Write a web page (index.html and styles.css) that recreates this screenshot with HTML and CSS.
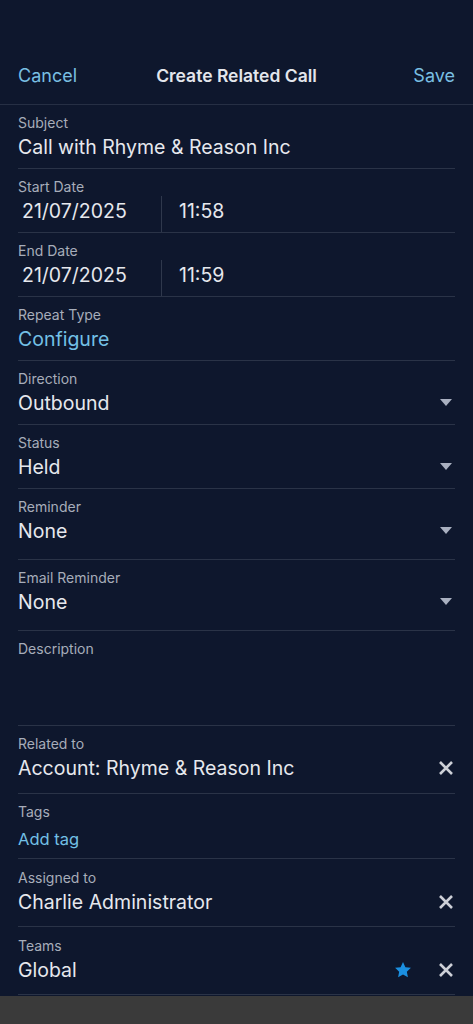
FILE: index.html
```
<!DOCTYPE html>
<html lang="en">

<head>
  <meta charset="UTF-8">
  <title>Create Related Call</title>
  <link rel="stylesheet" href="styles.css">
</head>

<body>
  <div class="screen">
    <div class="header">
      <a href="javascript:;" class="header-btn">Cancel</a>
      <span class="header-title">Create Related Call</span>
      <a href="javascript:;" class="header-btn save">Save</a>
    </div>

    <div class="form">
      <div class="field">
        <div class="field-label">Subject</div>
        <div class="field-value">Call with Rhyme &amp; Reason Inc</div>
      </div>

      <div class="field">
        <div class="field-label">Start Date</div>
        <div class="date-row">
          <div class="date-part">21/07/2025</div>
          <div class="time-part">11:58</div>
        </div>
      </div>

      <div class="field">
        <div class="field-label">End Date</div>
        <div class="date-row">
          <div class="date-part">21/07/2025</div>
          <div class="time-part">11:59</div>
        </div>
      </div>

      <div class="field">
        <div class="field-label">Repeat Type</div>
        <div class="field-value link">Configure</div>
      </div>

      <div class="field">
        <div class="field-label">Direction</div>
        <div class="field-row">
          <div class="field-value">Outbound</div>
          <span class="caret"></span>
        </div>
      </div>

      <div class="field">
        <div class="field-label">Status</div>
        <div class="field-row">
          <div class="field-value">Held</div>
          <span class="caret"></span>
        </div>
      </div>

      <div class="field tall">
        <div class="field-label">Reminder</div>
        <div class="field-row">
          <div class="field-value">None</div>
          <span class="caret"></span>
        </div>
      </div>

      <div class="field tall">
        <div class="field-label">Email Reminder</div>
        <div class="field-row">
          <div class="field-value">None</div>
          <span class="caret"></span>
        </div>
      </div>

      <div class="field description">
        <div class="field-label">Description</div>
      </div>

      <div class="field mid">
        <div class="field-label">Related to</div>
        <div class="field-row">
          <div class="field-value">Account: Rhyme &amp; Reason Inc</div>
          <svg class="clear" viewBox="0 0 16 16"><path d="M2 2L14 14M14 2L2 14" /></svg>
        </div>
      </div>

      <div class="field">
        <div class="field-label">Tags</div>
        <div class="field-value link small">Add tag</div>
      </div>

      <div class="field wide">
        <div class="field-label">Assigned to</div>
        <div class="field-row">
          <div class="field-value">Charlie Administrator</div>
          <svg class="clear" viewBox="0 0 16 16"><path d="M2 2L14 14M14 2L2 14" /></svg>
        </div>
      </div>

      <div class="field wide">
        <div class="field-label">Teams</div>
        <div class="field-row">
          <div class="field-value">Global</div>
          <svg class="star" viewBox="0 0 24 24"><path d="M12 2.5l2.9 6.1 6.6.8-4.9 4.6 1.3 6.6L12 17.3l-5.9 3.3 1.3-6.6-4.9-4.6 6.6-.8z" /></svg>
          <svg class="clear" viewBox="0 0 16 16"><path d="M2 2L14 14M14 2L2 14" /></svg>
        </div>
      </div>
    </div>
  </div>

  <div class="bottom-bar"></div>
</body>

</html>
```

FILE: styles.css
```
* {
  padding: 0;
  margin: 0;
  box-sizing: border-box;
}

body {
  background: #0e172d;
  font-family: Inter, "Noto Sans", sans-serif;
  width: 473px;
  height: 1024px;
  overflow: hidden;
  display: flex;
  flex-direction: column;
}

.screen {
  height: 996px;
  overflow: hidden;
}

.header {
  height: 105px;
  display: grid;
  grid-template-columns: 1fr auto 1fr;
  align-items: end;
  padding: 0 18px 17px 18px;
  border-bottom: 1px solid #262f44;
}

.header-btn {
  text-decoration: none;
  color: #79bfe2;
  font-size: 18px;
  line-height: 22px;
}

.header-btn.save {
  text-align: right;
}

.header-title {
  color: #e3e6ec;
  font-size: 17.5px;
  font-weight: 600;
  line-height: 22px;
}

.form {
  padding: 0 18px;
}

.field {
  padding: 9px 0 7px 0;
  border-bottom: 1px solid #2a3347;
}

.field.tall {
  padding-bottom: 14px;
}

.field.mid {
  padding-bottom: 11px;
}

.field.wide {
  padding-top: 10px;
  padding-bottom: 10px;
}

.field.description {
  height: 95px;
}

.field-label {
  color: #a7adba;
  font-size: 14px;
  line-height: 18px;
}

.field-value {
  color: #e6e8ed;
  font-size: 19.5px;
  line-height: 28px;
  padding-top: 1px;
  white-space: nowrap;
}

.field-value.link {
  color: #73c0e6;
}

.field-value.small {
  font-size: 16.5px;
  line-height: 24px;
  padding-top: 6px;
}

.field-row {
  display: flex;
  align-items: center;
}

.field-row .field-value {
  flex: 1;
}

.date-row {
  display: flex;
  height: 36px;
  margin-bottom: -7px;
}

.date-part,
.time-part {
  color: #e6e8ed;
  font-size: 19.5px;
  line-height: 28px;
  padding-top: 1px;
}

.date-part {
  width: 144px;
  padding-left: 4px;
  border-right: 1px solid #2f384c;
}

.time-part {
  padding-left: 17px;
}

.caret {
  width: 0;
  height: 0;
  margin-right: 3px;
  border-left: 6px solid transparent;
  border-right: 6px solid transparent;
  border-top: 7px solid #a9b0c0;
}

.clear {
  width: 16px;
  height: 16px;
  margin-right: 1px;
  fill: none;
  stroke: #cdd0d7;
  stroke-width: 2.6;
}

.star {
  width: 20px;
  height: 20px;
  margin-right: 25px;
  fill: #1b8fe0;
}

.bottom-bar {
  flex: 1;
  background: #3a3a3a;
}
```
